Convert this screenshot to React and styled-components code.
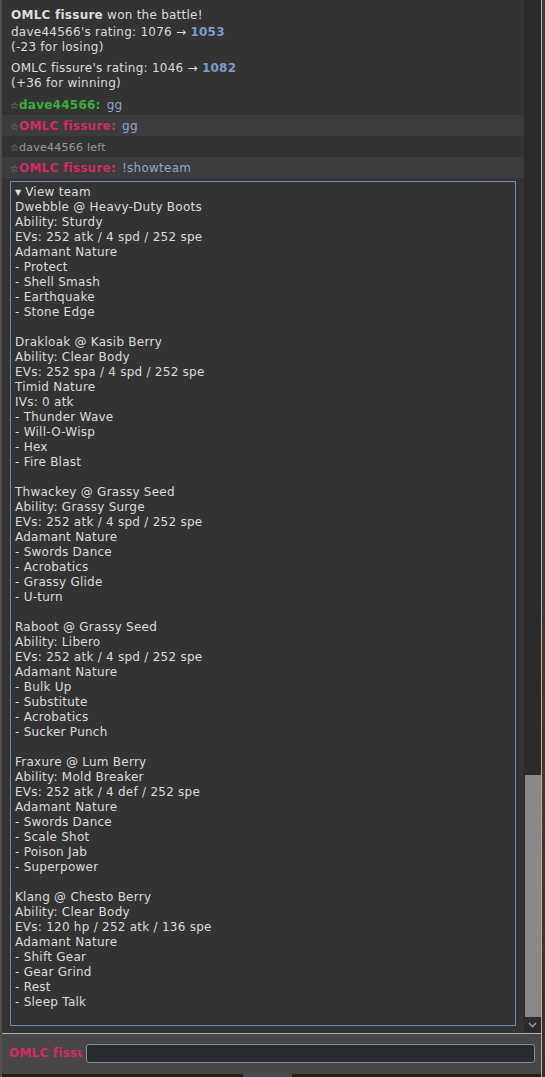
import React from "react";
import styled, { createGlobalStyle } from "styled-components";

const Global = createGlobalStyle`
  html, body { margin: 0; padding: 0; background: #222; }
  body { font-family: "DejaVu Sans", Verdana, sans-serif; }
`;

const FONT = `"DejaVu Sans", Verdana, sans-serif`;

const Page = styled.div`
  display: flex;
  width: 545px;
  height: 1077px;
  overflow: hidden;
  background: #2a2622;
`;

const LeftEdge = styled.div`
  width: 2px;
  flex: none;
  background: #524e4a;
`;

const Main = styled.div`
  width: 539px;
  flex: none;
  display: flex;
  flex-direction: column;
`;

const RightLine = styled.div`
  width: 1px;
  flex: none;
  background: #b4b4b4;
`;

const Backdrop = styled.div`
  flex: 1;
  background: linear-gradient(#3b3b3b 0, #3b3b3b 600px, #4a3a2a 640px, #3d3024 100%);
`;

const ChatRow = styled.div`
  display: flex;
  height: 1033px;
  flex: none;
`;

const ChatLog = styled.div`
  flex: 1;
  background: #333;
  overflow: hidden;
  font-family: ${FONT};
  font-size: 12px;
  letter-spacing: 0.25px;
  color: #ddd;
`;

const Block = styled.div`
  padding: ${(p) => p.$pad || "4px 8px 2px 8px"};
  line-height: ${(p) => p.$lh || "15px"};
  background: ${(p) => (p.$hl ? "#3c3c3c" : "transparent")};
  font-size: ${(p) => p.$size || "12px"};
  color: ${(p) => p.$color || "#ddd"};
`;

const Bold = styled.strong`
  font-weight: bold;
  color: ${(p) => p.$color || "inherit"};
`;

const Star = styled.span`
  color: #999;
  font-size: 10px;
  letter-spacing: 0;
`;

const Msg = styled.span`
  color: #93a6cd;
  margin-left: 6px;
`;

const TeamBox = styled.div`
  margin: 3px 8px 0 8px;
  border: 1px solid #6d8bb3;
  padding: 3px 4px 1px 4px;
  line-height: 15px;
  white-space: pre;
  height: 845px;
  box-sizing: border-box;
`;

const Summary = styled.div`
  display: flex;
  align-items: center;
  gap: 4px;
`;

const Triangle = styled.span`
  font-size: 8px;
  letter-spacing: 0;
  line-height: 15px;
`;

const Scrollbar = styled.div`
  width: 17px;
  flex: none;
  background: #2b2b2b;
  display: flex;
  flex-direction: column;
`;

const ScrollSpacer = styled.div`
  flex: 1;
`;

const Thumb = styled.div`
  height: 242px;
  margin-left: 1px;
  background: #888;
`;

const ArrowBtn = styled.div`
  height: 16px;
  background: #2b2b2b;
  display: flex;
  align-items: center;
  justify-content: center;
`;

const HLine = styled.div`
  height: 1px;
  flex: none;
  background: #b4b4b4;
`;

const InputBar = styled.div`
  height: 40px;
  flex: none;
  background: #474747;
  display: flex;
  align-items: center;
  padding: 0 6px 0 7px;
  gap: 3px;
  box-sizing: border-box;
`;

const NameLabel = styled.div`
  width: 74px;
  flex: none;
  overflow: hidden;
  white-space: nowrap;
  font-family: ${FONT};
  font-size: 12px;
  letter-spacing: 0.2px;
  font-weight: bold;
  color: #d42a6b;
  margin-top: -3px;
`;

const Input = styled.div`
  flex: 1;
  height: 19px;
  box-sizing: border-box;
  border: 1px solid #8a8a8a;
  border-radius: 3px;
  background: #272a2e;
  margin-top: -2px;
`;

const BottomStrip = styled.div`
  height: 3px;
  flex: none;
  display: flex;
  background: #211d1a;
`;

const StripTab = styled.div`
  margin-left: 241px;
  width: 49px;
  background: #4a4a4a;
`;

const team = [
  "Dwebble @ Heavy-Duty Boots",
  "Ability: Sturdy",
  "EVs: 252 atk / 4 spd / 252 spe",
  "Adamant Nature",
  "- Protect",
  "- Shell Smash",
  "- Earthquake",
  "- Stone Edge",
  "",
  "Drakloak @ Kasib Berry",
  "Ability: Clear Body",
  "EVs: 252 spa / 4 spd / 252 spe",
  "Timid Nature",
  "IVs: 0 atk",
  "- Thunder Wave",
  "- Will-O-Wisp",
  "- Hex",
  "- Fire Blast",
  "",
  "Thwackey @ Grassy Seed",
  "Ability: Grassy Surge",
  "EVs: 252 atk / 4 spd / 252 spe",
  "Adamant Nature",
  "- Swords Dance",
  "- Acrobatics",
  "- Grassy Glide",
  "- U-turn",
  "",
  "Raboot @ Grassy Seed",
  "Ability: Libero",
  "EVs: 252 atk / 4 spd / 252 spe",
  "Adamant Nature",
  "- Bulk Up",
  "- Substitute",
  "- Acrobatics",
  "- Sucker Punch",
  "",
  "Fraxure @ Lum Berry",
  "Ability: Mold Breaker",
  "EVs: 252 atk / 4 def / 252 spe",
  "Adamant Nature",
  "- Swords Dance",
  "- Scale Shot",
  "- Poison Jab",
  "- Superpower",
  "",
  "Klang @ Chesto Berry",
  "Ability: Clear Body",
  "EVs: 120 hp / 252 atk / 136 spe",
  "Adamant Nature",
  "- Shift Gear",
  "- Gear Grind",
  "- Rest",
  "- Sleep Talk",
];

const GREEN = "#38b038";
const PINK = "#d42a6b";
const BLUE = "#7f9bca";

export default function App() {
  return (
    <>
      <Global />
      <Page>
        <LeftEdge />
        <Main>
          <ChatRow>
            <ChatLog>
              <Block $pad="8px 8px 0 9px" $lh="14px">
                <Bold>OMLC fissure</Bold> won the battle!
              </Block>
              <Block $pad="3px 8px 3px 9px">
                dave44566's rating: 1076 → <Bold $color={BLUE}>1053</Bold>
                <br />
                (-23 for losing)
              </Block>
              <Block $pad="3px 8px 3px 9px">
                OMLC fissure's rating: 1046 → <Bold $color={BLUE}>1082</Bold>
                <br />
                (+36 for winning)
              </Block>
              <Block>
                <Star>☆</Star>
                <Bold $color={GREEN}>dave44566:</Bold>
                <Msg>gg</Msg>
              </Block>
              <Block $hl>
                <Star>☆</Star>
                <Bold $color={PINK}>OMLC fissure:</Bold>
                <Msg>gg</Msg>
              </Block>
              <Block $size="11px" $color="#9a9a9a">
                <Star>☆</Star>dave44566 left
              </Block>
              <Block $hl>
                <Star>☆</Star>
                <Bold $color={PINK}>OMLC fissure:</Bold>
                <Msg>!showteam</Msg>
              </Block>
              <TeamBox>
                <Summary>
                  <Triangle>▼</Triangle>
                  <span>View team</span>
                </Summary>
                {team.join("\n")}
              </TeamBox>
            </ChatLog>
            <Scrollbar>
              <ScrollSpacer />
              <Thumb />
              <ArrowBtn>
                <svg width="9" height="6" viewBox="0 0 9 6">
                  <path d="M1 1 L4.5 4.5 L8 1" fill="none" stroke="#9a9a9a" strokeWidth="1.6" />
                </svg>
              </ArrowBtn>
            </Scrollbar>
          </ChatRow>
          <HLine />
          <InputBar>
            <NameLabel>OMLC fissure</NameLabel>
            <Input />
          </InputBar>
          <BottomStrip>
            <StripTab />
          </BottomStrip>
        </Main>
        <RightLine />
        <Backdrop />
      </Page>
    </>
  );
}
